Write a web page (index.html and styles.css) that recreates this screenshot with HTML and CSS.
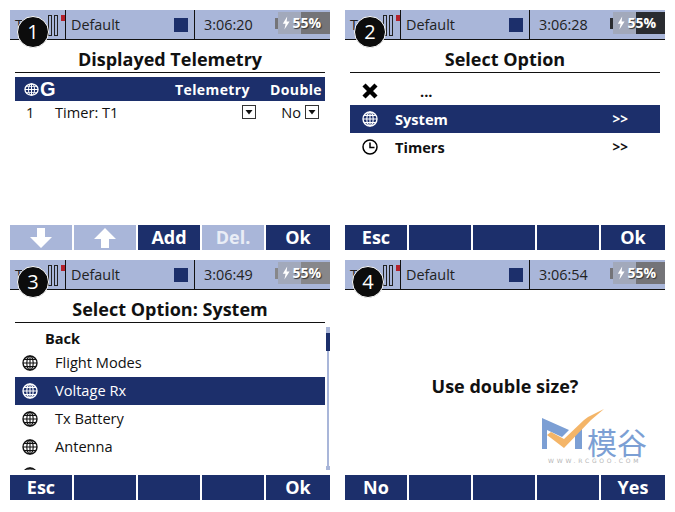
FILE: index.html
```html
<!DOCTYPE html>
<html>
<head>
  <title>Displayed Telemetry</title>
  <link rel="stylesheet" href="styles.css">
</head>
<body>
  <svg class="defs" width="0" height="0">
    <symbol id="globe" viewBox="0 0 16 16" preserveAspectRatio="none">
      <circle cx="8" cy="8" r="7" fill="none" stroke="currentColor" stroke-width="1.4"/>
      <ellipse cx="8" cy="8" rx="3.2" ry="7" fill="none" stroke="currentColor" stroke-width="1.1"/>
      <path d="M8 1V15M1 8H15M2 4.4H14M2 11.6H14" fill="none" stroke="currentColor" stroke-width="1.1"/>
    </symbol>
    <symbol id="bolt" viewBox="0 0 10 16">
      <path d="M6.5 0 1 9H4.5L3 16 9.5 6H5.8Z" fill="currentColor"/>
    </symbol>
    <symbol id="drop" viewBox="0 0 14 14">
      <rect x="0.5" y="0.5" width="13" height="13" fill="#fff" stroke="#333"/>
      <path d="M3.5 5H10.5L7 9.5Z" fill="#111"/>
    </symbol>
  </svg>

  <div class="screens">

    <!-- 1 -->
    <div class="screen">
      <div class="status">
        <div class="tx">Tx<span class="bar"></span><span class="bar"></span><span class="dot"></span></div>
        <div class="model">Default<span class="square"></span></div>
        <div class="clock">3:06:20
          <div class="battery bat-mid"><span class="level"></span><svg class="bolt"><use href="#bolt"/></svg><span class="pct">55%</span></div>
        </div>
      </div>
      <div class="badge">1</div>
      <div class="title">Displayed Telemetry</div>
      <div class="content">
        <div class="head">
          <svg class="globe head-globe"><use href="#globe"/></svg><span class="head-g">G</span>
          <span class="head-tel">Telemetry</span>
          <span class="head-dbl">Double</span>
        </div>
        <div class="tel-row">
          <span class="num">1</span>
          <span class="tel-name">Timer: T1</span>
          <svg class="drop"><use href="#drop"/></svg>
          <span class="no">No</span>
          <svg class="drop"><use href="#drop"/></svg>
        </div>
      </div>
      <div class="footer">
        <div class="key off"><svg class="arrow" viewBox="0 0 22 20"><path d="M7 0H15V9H22L11 20 0 9H7Z" fill="#fff"/></svg></div>
        <div class="key off"><svg class="arrow" viewBox="0 0 22 20"><path d="M7 20H15V11H22L11 0 0 11H7Z" fill="#fff"/></svg></div>
        <div class="key">Add</div>
        <div class="key off">Del.</div>
        <div class="key">Ok</div>
      </div>
    </div>

    <!-- 2 -->
    <div class="screen">
      <div class="status">
        <div class="tx">Tx<span class="bar"></span><span class="bar"></span><span class="dot"></span></div>
        <div class="model">Default<span class="square"></span></div>
        <div class="clock">3:06:28
          <div class="battery bat-dark"><span class="level"></span><svg class="bolt"><use href="#bolt"/></svg><span class="pct">55%</span></div>
        </div>
      </div>
      <div class="badge badge-2">2</div>
      <div class="title">Select Option</div>
      <div class="content menu">
        <div class="row bold">
          <svg class="icon" viewBox="0 0 16 16"><path d="M2 2 14 14M14 2 2 14" stroke="#000" stroke-width="4.4" fill="none"/></svg>
          <span class="dots">...</span>
        </div>
        <div class="row bold selected">
          <svg class="icon"><use href="#globe"/></svg>
          <span class="label">System</span>
          <span class="more">&gt;&gt;</span>
        </div>
        <div class="row bold">
          <svg class="icon" viewBox="0 0 16 16"><circle cx="8" cy="8" r="7" fill="none" stroke="#000" stroke-width="1.5"/><path d="M8 3.5V8.5H12.5" fill="none" stroke="#000" stroke-width="1.5"/></svg>
          <span class="label">Timers</span>
          <span class="more">&gt;&gt;</span>
        </div>
      </div>
      <div class="footer">
        <div class="key">Esc</div>
        <div class="key"></div>
        <div class="key"></div>
        <div class="key"></div>
        <div class="key">Ok</div>
      </div>
    </div>

    <!-- 3 -->
    <div class="screen">
      <div class="status">
        <div class="tx">Tx<span class="bar"></span><span class="bar"></span><span class="dot"></span></div>
        <div class="model">Default<span class="square"></span></div>
        <div class="clock">3:06:49
          <div class="battery bat-light"><span class="level"></span><svg class="bolt"><use href="#bolt"/></svg><span class="pct">55%</span></div>
        </div>
      </div>
      <div class="badge">3</div>
      <div class="title">Select Option: System</div>
      <div class="content list">
        <div class="row row-back bold"><span class="label">Back</span></div>
        <div class="row"><svg class="icon"><use href="#globe"/></svg><span class="label">Flight Modes</span></div>
        <div class="row selected"><svg class="icon"><use href="#globe"/></svg><span class="label">Voltage Rx</span></div>
        <div class="row"><svg class="icon"><use href="#globe"/></svg><span class="label">Tx Battery</span></div>
        <div class="row"><svg class="icon"><use href="#globe"/></svg><span class="label">Antenna</span></div>
        <div class="row"><svg class="icon"><use href="#globe"/></svg><span class="label"></span></div>
      </div>
      <div class="scrollbar"><span class="thumb"></span></div>
      <div class="footer">
        <div class="key">Esc</div>
        <div class="key"></div>
        <div class="key"></div>
        <div class="key"></div>
        <div class="key">Ok</div>
      </div>
    </div>

    <!-- 4 -->
    <div class="screen">
      <div class="status">
        <div class="tx">Tx<span class="bar"></span><span class="bar"></span><span class="dot"></span></div>
        <div class="model">Default<span class="square"></span></div>
        <div class="clock">3:06:54
          <div class="battery bat-mid"><span class="level"></span><svg class="bolt"><use href="#bolt"/></svg><span class="pct">55%</span></div>
        </div>
      </div>
      <div class="badge">4</div>
      <div class="question">Use double size?</div>
      <div class="logo">
        <div class="logo-top">
          <svg class="logo-mark" width="64" height="44" viewBox="0 0 64 44">
            <path d="M0 9 27 21 20 28 5 21V40H0Z" fill="#7c9fd4"/>
            <path d="M33 24 40 18V40H33Z" fill="#7c9fd4"/>
            <path d="M5 26 22 39 49 11 62 0 46 8 42 11 22 30 9 23Z" fill="#f4b568"/>
          </svg>
          <span class="logo-name">模谷</span>
        </div>
        <div class="logo-url">WWW.RCGOO.COM</div>
      </div>
      <div class="footer">
        <div class="key">No</div>
        <div class="key"></div>
        <div class="key"></div>
        <div class="key"></div>
        <div class="key">Yes</div>
      </div>
    </div>

  </div>
</body>
</html>
```

FILE: styles.css
```css
body {
  margin: 0;
  padding: 10px;
  background-color: #fff;
  font-family: "Open Sans", "Noto Sans", sans-serif;
  color: #111;
  overflow: hidden;
}

.defs {
  display: block;
}

.screens {
  display: grid;
  grid-template-columns: 320px 320px;
  grid-auto-rows: 240px;
  column-gap: 15px;
  row-gap: 10px;
}

.screen {
  position: relative;
  display: flex;
  flex-direction: column;
  height: 240px;
}

/* status bar */
.status {
  display: flex;
  flex: none;
  height: 29px;
  background-color: #a9b6d9;
  border-bottom: 1px solid #111;
  font-size: 14.4px;
  line-height: 29px;
  color: #222;
}

.tx {
  display: flex;
  align-items: flex-start;
  width: 55px;
  padding-left: 5px;
  box-sizing: border-box;
}

.bar {
  flex: none;
  width: 2px;
  height: 19px;
  margin-top: 5px;
  border: 1px solid #222;
}

.bar:first-of-type {
  margin-left: 18px;
  margin-right: 2px;
}

.dot {
  flex: none;
  width: 4px;
  height: 6px;
  margin-top: 5px;
  margin-left: 3px;
  background-color: #b4202a;
}

.model {
  display: flex;
  justify-content: space-between;
  align-items: center;
  width: 130px;
  box-sizing: border-box;
  padding: 0 6px 0 5px;
  border-left: 1px solid #111;
  border-right: 1px solid #111;
}

.square {
  width: 14px;
  height: 14px;
  background-color: #1c2f6b;
}

.clock {
  display: flex;
  flex: 1;
  justify-content: space-between;
  align-items: center;
  padding-left: 9px;
}

.battery {
  position: relative;
  display: flex;
  align-items: center;
  justify-content: flex-end;
  width: 52px;
  height: 22px;
  margin-top: -4px;
  padding-right: 9px;
  box-sizing: border-box;
  font-size: 14px;
  font-weight: 700;
  line-height: 22px;
  color: #fff;
  text-shadow: 1px 1px 1px #333;
}

.battery::before {
  content: "";
  position: absolute;
  left: -3px;
  top: 6px;
  width: 3px;
  height: 11px;
  background-color: inherit;
}

.bat-mid { background-color: #747478; }
.bat-dark { background-color: #2a2c30; }
.bat-light { background-color: #87878a; }

.level {
  position: absolute;
  left: 0;
  top: 0;
  width: 23px;
  height: 22px;
  background-color: #a2a9bb;
}

.bolt {
  position: relative;
  width: 8px;
  height: 14px;
  margin-right: 2px;
}

.pct {
  position: relative;
}

.badge {
  position: absolute;
  left: 7px;
  top: 6px;
  width: 30px;
  height: 30px;
  border: 1px solid #fff;
  border-radius: 50%;
  background-color: #0c0c0c;
  color: #fff;
  font-size: 20px;
  line-height: 30px;
  text-align: center;
}

.badge-2 {
  left: 9px;
}

/* title */
.title {
  flex: none;
  height: 32px;
  margin: 0 5px;
  border-bottom: 1px solid #111;
  font-size: 18px;
  font-weight: 700;
  line-height: 38px;
  text-align: center;
  color: #111;
}

.content {
  flex: 1;
  margin: 4px 5px 0;
  overflow: hidden;
}

.list {
  margin-top: 0;
  height: 147px;
  flex: none;
}

/* telemetry table */
.head {
  display: flex;
  align-items: center;
  height: 24px;
  padding-left: 9px;
  background-color: #1c2f6b;
  color: #fff;
  font-size: 14px;
  font-weight: 700;
  letter-spacing: 0.4px;
}

.head-globe {
  width: 15px;
  height: 13px;
}

.head-g {
  margin-left: 1px;
  font-family: "Liberation Sans", Arial, sans-serif;
  font-size: 20px;
  letter-spacing: 0;
}

.head-tel {
  margin-left: auto;
}

.head-dbl {
  margin-left: 20px;
  margin-right: 3px;
}

.tel-row {
  display: flex;
  align-items: center;
  height: 22px;
  font-size: 14.6px;
}

.num {
  width: 40px;
  padding-left: 11px;
  box-sizing: border-box;
}

.tel-name {
  flex: 1;
}

.drop {
  flex: none;
  width: 14px;
  height: 14px;
}

.no {
  margin-left: 25px;
  margin-right: 4px;
}

.tel-row .drop:last-child {
  margin-right: 6px;
}

/* menu rows */
.row {
  display: flex;
  align-items: center;
  height: 28px;
  padding-bottom: 2px;
  box-sizing: border-box;
  font-size: 14.6px;
}

.row-back {
  height: 26px;
  padding: 3px 0 0;
}

.row-back .label {
  margin-left: 30px;
}

.row.bold {
  font-weight: 700;
}

.selected {
  background-color: #1c2f6b;
  color: #fff;
}

.icon {
  flex: none;
  width: 16px;
  height: 16px;
  margin-top: 2px;
  margin-left: 7px;
}

.menu .row {
  padding-bottom: 0;
}

.menu .icon {
  margin-top: 0;
  margin-left: 12px;
}

.label {
  margin-left: 17px;
}

.dots {
  margin-left: 42px;
}

.more {
  position: relative;
  margin-left: auto;
  margin-right: 32px;
  font-size: 13.5px;
}

.scrollbar {
  position: absolute;
  left: 316px;
  top: 67px;
  width: 4px;
  height: 143px;
  background: linear-gradient(#a9b6d9, #a9b6d9) 1px 0 / 2px 100% no-repeat;
}

.scrollbar::after {
  content: "";
  position: absolute;
  left: 0;
  bottom: 0;
  width: 4px;
  height: 4px;
  background-color: #a9b6d9;
}

.thumb {
  display: block;
  width: 4px;
  height: 24px;
  background: linear-gradient(#a9b6d9 6px, #1c2f6b 6px);
}

/* footer keys */
.footer {
  display: grid;
  grid-template-columns: 62px 62px 62px 62px 64px;
  column-gap: 2px;
  flex: none;
  height: 25px;
  margin-top: auto;
}

.key {
  display: flex;
  align-items: center;
  justify-content: center;
  background-color: #1c2f6b;
  color: #fff;
  font-size: 18px;
  font-weight: 700;
  line-height: 25px;
}

.key.off {
  background-color: #a9b6d9;
  color: #e9edf6;
}

.arrow {
  width: 22px;
  height: 20px;
}

/* dialog */
.question {
  position: absolute;
  left: 0;
  right: 0;
  top: 114px;
  font-size: 18px;
  font-weight: 700;
  text-align: center;
  color: #111;
}

.logo {
  position: absolute;
  left: 197px;
  top: 153px;
  width: 108px;
}

.logo-top {
  display: flex;
  align-items: flex-end;
  height: 40px;
}

.logo-mark {
  flex: none;
  margin-right: -19px;
}

.logo-name {
  font-family: "Noto Sans CJK SC", sans-serif;
  font-size: 30px;
  line-height: 26px;
  margin-bottom: -1px;
  color: #7c9fd4;
}

.logo-url {
  margin-top: 5px;
  padding-left: 6px;
  font-family: "DejaVu Sans", sans-serif;
  font-size: 6px;
  letter-spacing: 2.8px;
  line-height: 6px;
  white-space: nowrap;
  color: #b5b5b5;
}
```
